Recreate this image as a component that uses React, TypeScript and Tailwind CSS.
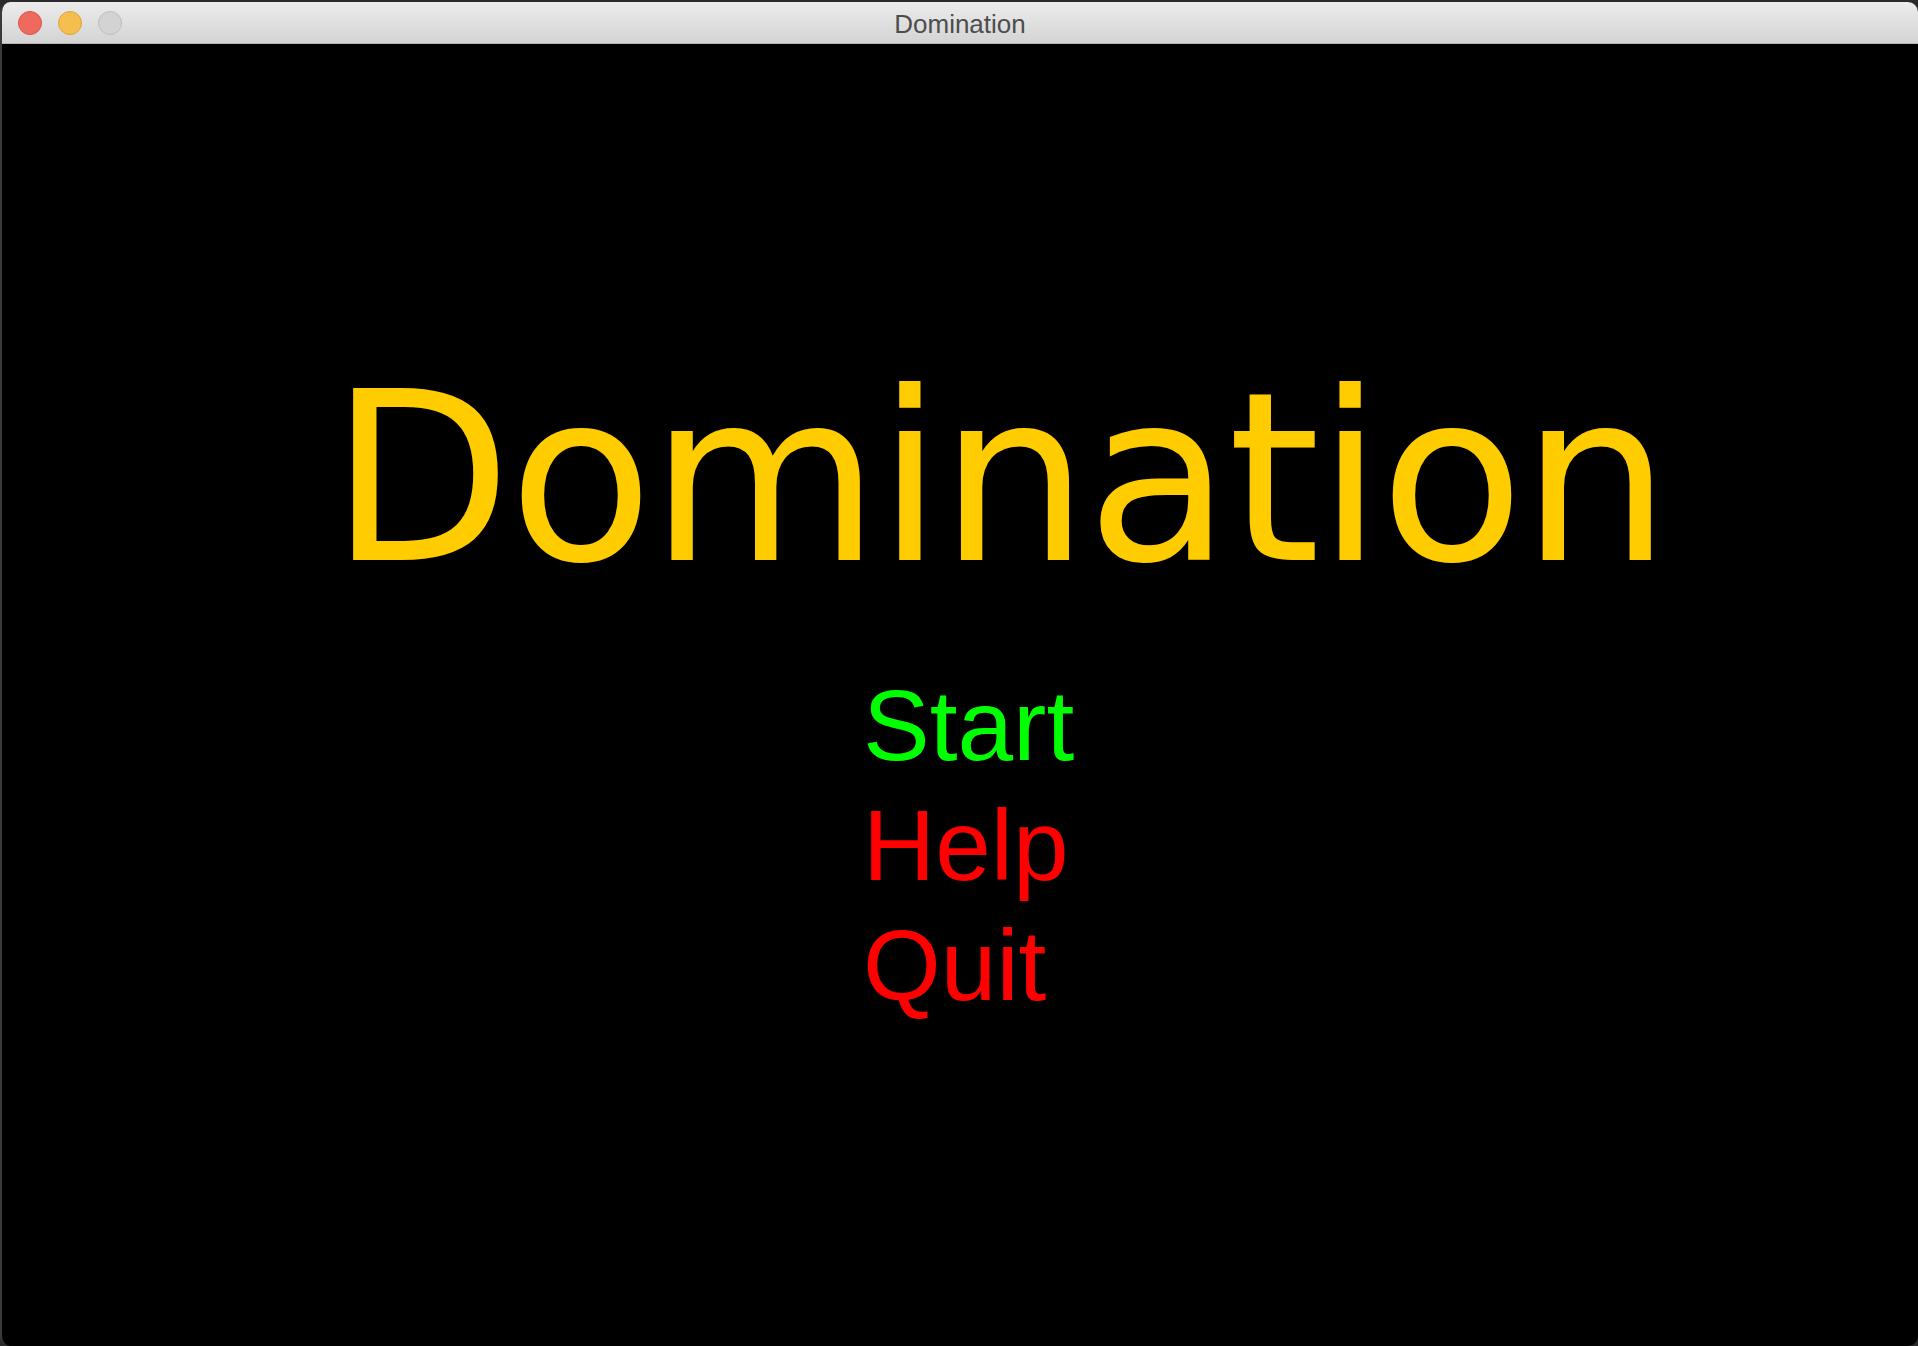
const MENU = [
  { label: "Start", color: "text-[#00ff00]" },
  { label: "Help", color: "text-[#ff0000]" },
  { label: "Quit", color: "text-[#ff0000]" },
];

function TrafficLights() {
  return (
    <div className="flex items-center gap-4 pl-[16px]">
      <span className="block h-6 w-6 rounded-full border border-[#d9534a] bg-[#ee6a5f]" />
      <span className="block h-6 w-6 rounded-full border border-[#dea238] bg-[#f5bf4f]" />
      <span className="block h-6 w-6 rounded-full border border-[#bdbdbd] bg-[#d3d3d3]" />
    </div>
  );
}

export default function App() {
  return (
    <div className="h-[1346px] w-[1918px] overflow-hidden bg-[#2b2b2b] pt-[2px]">
      <div className="flex h-full flex-col overflow-hidden rounded-[10px] border-l-2 border-[#3a3a3a] bg-black">
        {/* title bar */}
        <div className="relative flex h-[42px] shrink-0 items-center border-b border-[#b5b5b5] bg-gradient-to-b from-[#ececec] to-[#d4d4d4]">
          <TrafficLights />
          <div className="absolute inset-0 flex items-center justify-center pt-[2px] font-['Liberation_Sans',Arial,sans-serif] text-[26px] leading-none text-[#4d4d4d]">
            Domination
          </div>
        </div>

        {/* game canvas */}
        <div className="flex flex-1 flex-col items-start pt-[317px]">
          <h1 className="ml-[328px] font-['DejaVu_Sans',Verdana,sans-serif] text-[236px] leading-none font-normal tracking-[-3px] text-[#ffcc00]">
            Domination
          </h1>
          <div className="mt-[68px] ml-[861px] flex flex-col font-['Liberation_Sans',Arial,sans-serif] text-[100px] leading-[120px]">
            {MENU.map((item) => (
              <div key={item.label} className={item.color}>
                {item.label}
              </div>
            ))}
          </div>
        </div>
      </div>
    </div>
  );
}
